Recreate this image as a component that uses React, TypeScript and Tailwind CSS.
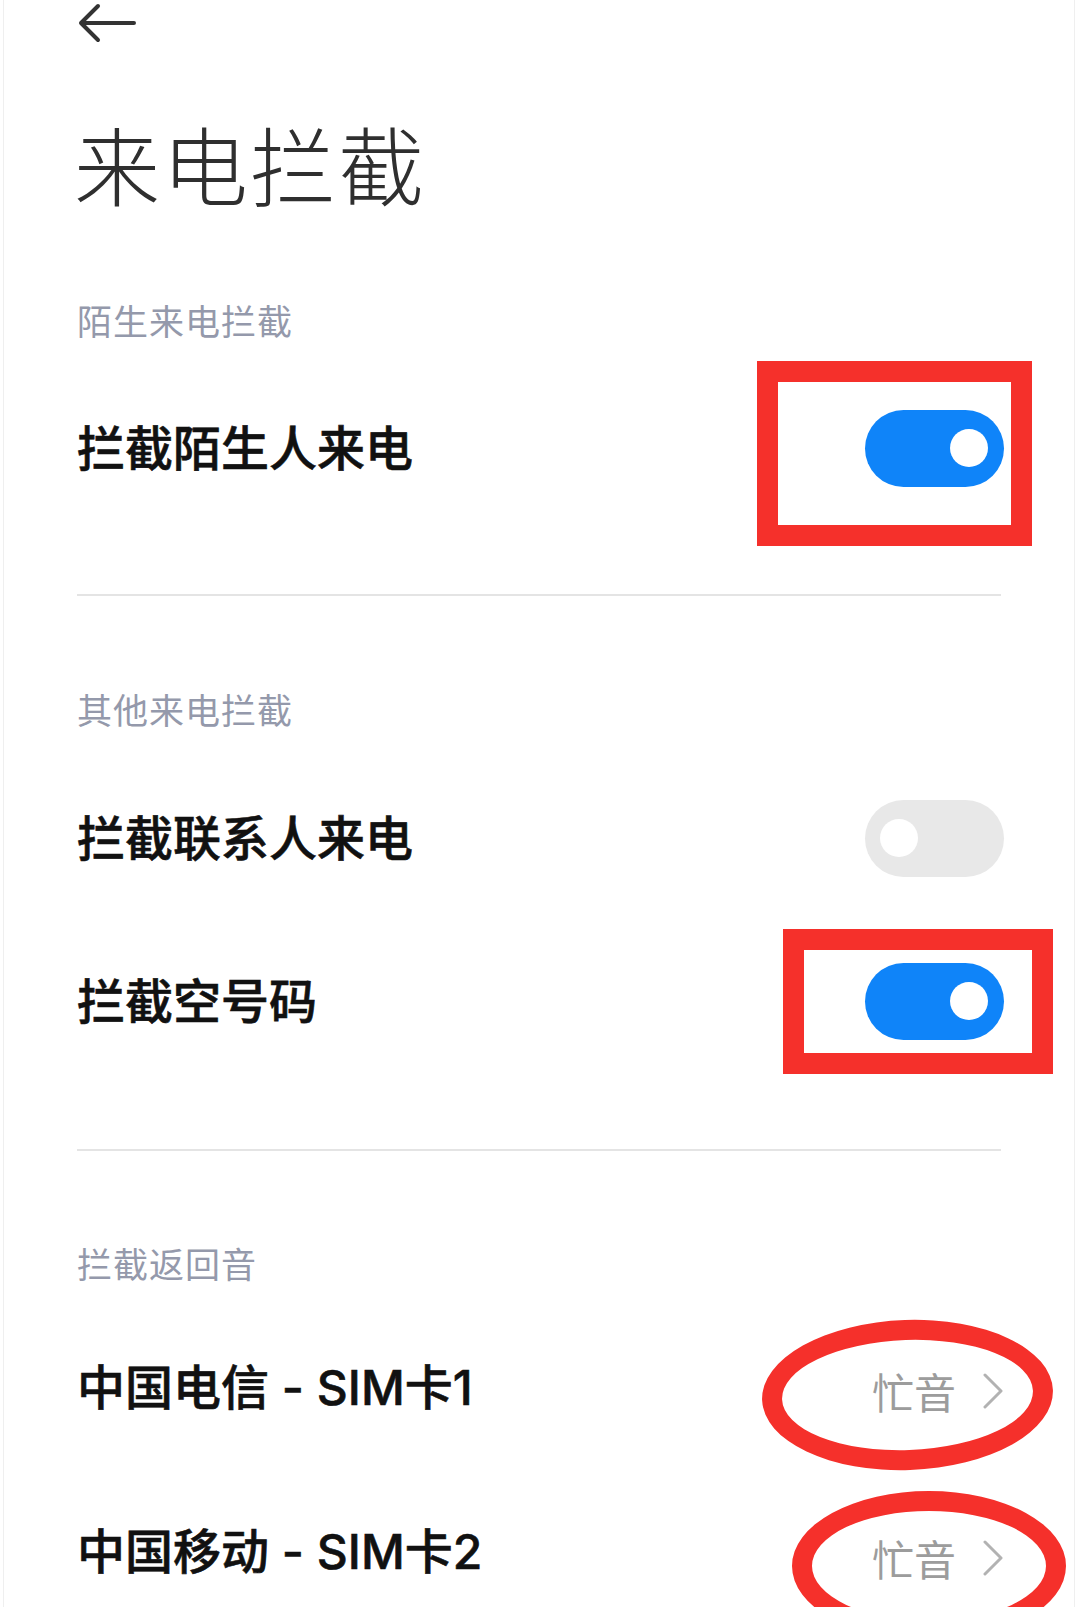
import React from "react";

const font = { fontFamily: '"Noto Sans CJK SC", "Noto Sans", sans-serif' };
const simFont = { fontFamily: 'Inter, "Noto Sans CJK SC", sans-serif' };

function Toggle({ on }: { on: boolean }) {
  return (
    <div
      className={`relative w-[139px] h-[77px] rounded-full flex items-center ${
        on ? "bg-[#0f84f9] justify-end pr-[16px]" : "bg-[#e8e8e8] justify-start pl-[15px]"
      }`}
    >
      <div className="w-[38px] h-[38px] rounded-full bg-white" />
    </div>
  );
}

function SectionLabel({ text, h }: { text: string; h: string }) {
  return (
    <div className={`${h} flex items-center`}>
      <span className="text-[35px] leading-none tracking-[1px] text-[#9499ab]">{text}</span>
    </div>
  );
}

function Divider({ h }: { h: string }) {
  return (
    <div className={`${h} flex items-center pr-[73px]`}>
      <div className="w-full h-[2px] bg-[#e4e4e4]" />
    </div>
  );
}

function Chevron() {
  return (
    <svg width="22" height="36" viewBox="0 0 22 36" fill="none">
      <path d="M3 2 L19 18 L3 34" stroke="#b2b2b2" strokeWidth="3" strokeLinecap="round" strokeLinejoin="round" />
    </svg>
  );
}

const rowText = "text-[48px] leading-none font-medium text-[#111] mb-[6px] [-webkit-text-stroke:0.6px_#111]";

export default function App() {
  return (
    <div className="w-[1080px] h-[1607px] overflow-hidden bg-white" style={font}>
      <div className="ml-[3px] w-[1072px] h-full border-l border-r border-[#efefef] pl-[73px] relative">
        {/* Header */}
        <div className="h-[46px] flex items-center">
          <svg width="58" height="40" viewBox="0 0 58 40" fill="none" className="ml-[1px]">
            <path d="M3 20 H56 M20 3 L3 20 L20 37" stroke="#333" strokeWidth="4" strokeLinecap="round" strokeLinejoin="round" />
          </svg>
        </div>

        {/* Title */}
        <div className="h-[242px] flex items-center">
          <h1 className="text-[86px] leading-none font-light text-[#2f2f2f] tracking-[2px] mb-[8px] -ml-[3px]">来电拦截</h1>
        </div>

        <SectionLabel text="陌生来电拦截" h="h-[62px]" />

        {/* Row: strangers */}
        <div className="relative h-[196px] flex items-center justify-between pr-[70px]">
          <span className={rowText}>拦截陌生人来电</span>
          <Toggle on />
          <div className="absolute left-[680px] top-[11px] w-[275px] h-[185px] border-[21px] border-[#f5302b]" />
        </div>

        <Divider h="h-[98px]" />

        <SectionLabel text="其他来电拦截" h="h-[128px]" />

        {/* Row: contacts */}
        <div className="h-[132px] flex items-center justify-between pr-[70px]">
          <span className={rowText}>拦截联系人来电</span>
          <Toggle on={false} />
        </div>

        {/* Row: empty numbers */}
        <div className="relative h-[194px] flex items-center justify-between pr-[70px]">
          <span className={rowText}>拦截空号码</span>
          <Toggle on />
          <div className="absolute left-[706px] top-[25px] w-[270px] h-[145px] border-[21px] border-[#f5302b]" />
        </div>

        <Divider h="h-[104px]" />

        <SectionLabel text="拦截返回音" h="h-[120px]" />

        {/* SIM 1 */}
        <div className="relative h-[138px] flex items-center justify-between pr-[70px]">
          <span className={rowText} style={simFont}>
            中国电信 - SIM卡1
          </span>
          <div className="flex items-center gap-[26px]">
            <span className="text-[42px] leading-none text-[#9c9c9c]">忙音</span>
            <Chevron />
          </div>
          <div className="absolute left-[685px] top-[-2px] w-[291px] h-[150px] border-[20px] border-[#f5302b] rounded-[50%] -rotate-2" />
        </div>

        {/* SIM 2 */}
        <div className="relative h-[190px] flex items-center justify-between pr-[70px]">
          <span className={rowText} style={simFont}>
            中国移动 - SIM卡2
          </span>
          <div className="flex items-center gap-[26px] self-start mt-[77px]">
            <span className="text-[42px] leading-none text-[#9c9c9c]">忙音</span>
            <Chevron />
          </div>
          <div className="absolute left-[715px] top-[31px] w-[274px] h-[150px] border-[20px] border-[#f5302b] rounded-[50%]" />
        </div>
      </div>
    </div>
  );
}
